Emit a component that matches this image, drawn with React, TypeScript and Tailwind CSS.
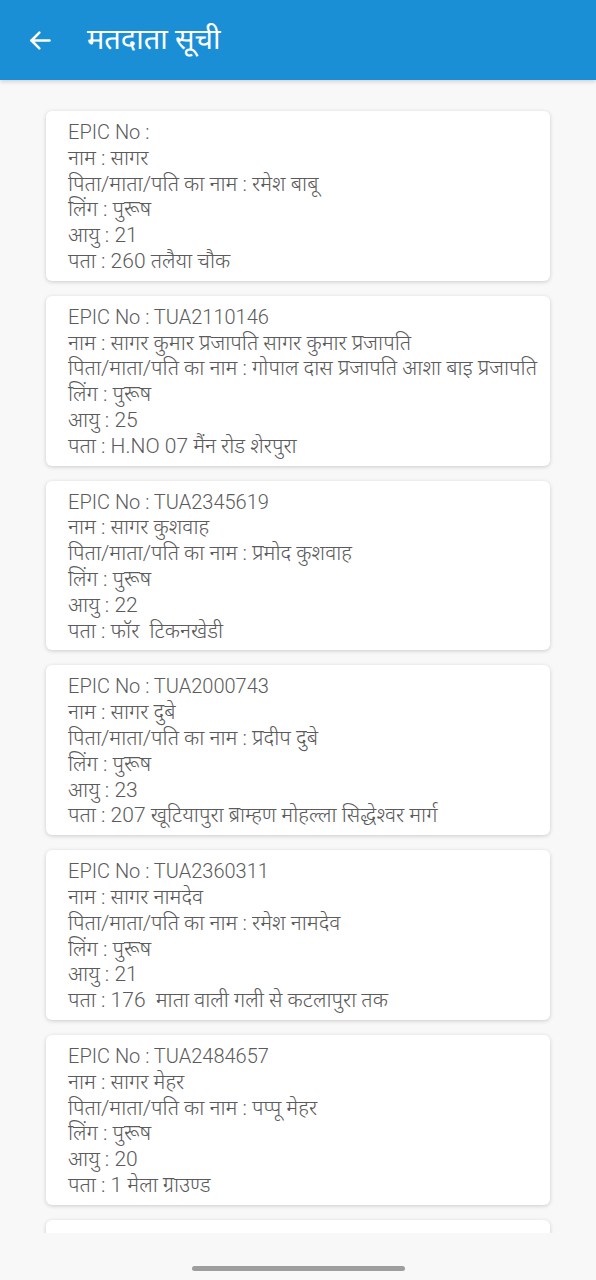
import React from "react";

const voters = [
  { epic: "", name: "सागर", parent: "रमेश बाबू", gender: "पुरूष", age: "21", address: "260 तलैया चौक" },
  { epic: "TUA2110146", name: "सागर कुमार प्रजापति सागर कुमार प्रजापति", parent: "गोपाल दास प्रजापति आशा बाइ प्रजापति", gender: "पुरूष", age: "25", address: "H.NO 07 मैंन रोड शेरपुरा" },
  { epic: "TUA2345619", name: "सागर कुशवाह", parent: "प्रमोद कुशवाह", gender: "पुरूष", age: "22", address: "फॉर  टिकनखेडी" },
  { epic: "TUA2000743", name: "सागर दुबे", parent: "प्रदीप दुबे", gender: "पुरूष", age: "23", address: "207 खूटियापुरा ब्राम्हण मोहल्ला सिद्धेश्वर मार्ग" },
  { epic: "TUA2360311", name: "सागर नामदेव", parent: "रमेश नामदेव", gender: "पुरूष", age: "21", address: "176  माता वाली गली से कटलापुरा तक" },
  { epic: "TUA2484657", name: "सागर मेहर", parent: "पप्पू मेहर", gender: "पुरूष", age: "20", address: "1 मेला ग्राउण्ड" },
  { epic: "TUA1825077", name: "सागर", parent: "", gender: "पुरूष", age: "", address: "" },
];

const font = { fontFamily: "Roboto, 'Noto Sans', 'Noto Sans Devanagari', sans-serif" };

function VoterCard({ v }: { v: (typeof voters)[number] }) {
  return (
    <div className="bg-white rounded-md shadow-[0_1px_4px_rgba(0,0,0,0.18)] pl-[22px] pr-2 pt-[9px] pb-[6px] text-[21px] leading-[25.8px] text-[#5b5b5b] font-light">
      <div className="text-[20px]">EPIC No : {v.epic}</div>
      <div>नाम : {v.name}</div>
      <div className="whitespace-nowrap">पिता/माता/पति का नाम : {v.parent}</div>
      <div>लिंग : {v.gender}</div>
      <div>आयु : {v.age}</div>
      <div className="whitespace-pre">पता : {v.address}</div>
    </div>
  );
}

export default function App() {
  return (
    <div className="h-[1280px] w-[596px] flex flex-col bg-[#f8f8f8] overflow-hidden" style={font}>
      <header className="h-20 shrink-0 bg-[#1b8fd6] flex items-center shadow-[0_2px_4px_rgba(0,0,0,0.15)] z-10">
        <svg className="ml-[27px] w-[27px] h-[27px]" viewBox="0 0 24 24" fill="none" stroke="white" strokeWidth="2.2" strokeLinecap="round" strokeLinejoin="round">
          <path d="M20 12H4" />
          <path d="M11 5l-7 7 7 7" />
        </svg>
        <h1 className="ml-[33px] text-white text-[29px] font-normal">मतदाता सूची</h1>
      </header>
      <main className="flex-1 overflow-hidden px-[46px] pt-[31px] flex flex-col gap-[15px]">
        {voters.map((v, i) => (
          <VoterCard key={i} v={v} />
        ))}
      </main>
      <footer className="h-[47px] shrink-0 flex justify-center pt-[33px] bg-[#f8f8f8]">
        <div className="w-[213px] h-[5px] rounded-full bg-[#9e9e9e]" />
      </footer>
    </div>
  );
}
